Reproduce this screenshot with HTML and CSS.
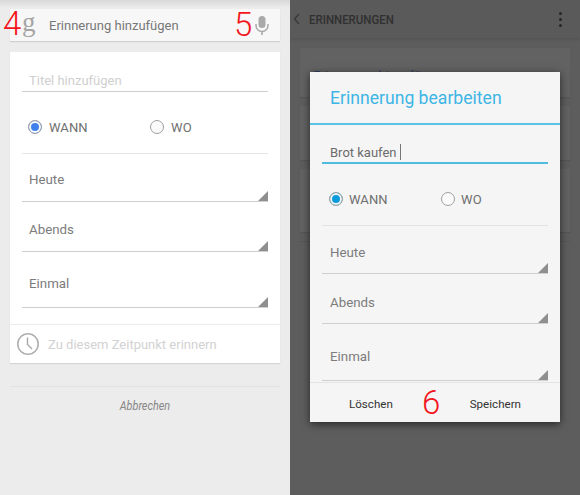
FILE: index.html
```html
<!DOCTYPE html>
<html lang="de">
<head>
<meta charset="utf-8">
<title>Erinnerung</title>
<link rel="stylesheet" href="styles.css">
</head>
<body>
<div class="screens">
  <section class="pane left">
    <div class="searchbar">
      <span class="g-logo">g</span>
      <span class="search-text">Erinnerung hinzufügen</span>
      <svg class="mic" width="14" height="20" viewBox="0 0 14 20"><rect x="3.500" y="0" width="7" height="12" rx="3.500" fill="#a9a9a9"/><path d="M1 8v1.500a6 6 0 0 0 12 0V8" fill="none" stroke="#a9a9a9" stroke-width="1.500"/><rect x="6.200" y="15" width="1.600" height="4" fill="#a9a9a9"/></svg>
    </div>
    <div class="card">
      <div class="title-field">Titel hinzufügen</div>
      <div class="radios">
        <span class="radio-item wide"><span class="radio on"></span>WANN</span>
        <span class="radio-item"><span class="radio"></span>WO</span>
      </div>
      <div class="rule"></div>
      <div class="select first">Heute</div>
      <div class="select">Abends</div>
      <div class="select tall">Einmal</div>
      <div class="time-row">
        <svg class="clock" width="24" height="24" viewBox="0 0 24 24"><circle cx="12" cy="12" r="10.200" fill="none" stroke="#b0b0b0" stroke-width="1.600"/><path d="M11.500 5.500v7l4.500 4.500" fill="none" stroke="#a8a8a8" stroke-width="1.400"/></svg>
        <span>Zu diesem Zeitpunkt erinnern</span>
      </div>
    </div>
    <div class="cancel"><span class="cancel-text">Abbrechen</span></div>
  </section>
  <section class="pane right">
    <header class="topbar">
      <svg class="back" width="7" height="12" viewBox="0 0 7 12"><path d="M6 1 1.500 6 6 11" fill="none" stroke="#3a3a3a" stroke-width="1.500"/></svg>
      <span class="bar-title">ERINNERUNGEN</span>
      <span class="dots"><i></i><i></i><i></i></span>
    </header>
    <div class="bg-card"><span class="bg-text">Erinnerung hinzufügen</span></div>
    <div class="bg-card second"></div>
    <div class="bg-card third"></div>
    <div class="bg-line"></div>
    <div class="dialog">
      <h1 class="dlg-title">Erinnerung bearbeiten</h1>
      <div class="dlg-body">
        <div class="edit-field">Brot kaufen<span class="caret"></span></div>
        <div class="radios dlg-radios">
          <span class="radio-item wide"><span class="radio on cyan"></span>WANN</span>
          <span class="radio-item"><span class="radio"></span>WO</span>
        </div>
        <div class="rule"></div>
        <div class="select first">Heute</div>
        <div class="select">Abends</div>
        <div class="select tall">Einmal</div>
      </div>
      <div class="dlg-actions">
        <span>Löschen</span>
        <span>Speichern</span>
      </div>
    </div>
  </section>
  <span class="mark m4">4</span>
  <span class="mark m5">5</span>
  <span class="mark m6">6</span>
</div>
</body>
</html>
```

FILE: styles.css
```css
* { box-sizing: border-box; }
html, body { margin: 0; padding: 0; }
body { width: 580px; height: 495px; overflow: hidden; font-family: Roboto, "Liberation Sans", sans-serif; }
.screens { position: relative; display: flex; width: 580px; height: 495px; }
.pane { width: 290px; height: 495px; position: relative; overflow: hidden; }

.left { background: linear-gradient(#d8d8d8 0, #ececec 8px); padding: 9px 10px 0; }
.searchbar { display: flex; align-items: center; height: 32px; background: #f7f7f7; box-shadow: 0 1px 1px #d0d0d0; padding: 0 11px 0 12px; }
.g-logo { width: 27px; font: 27px/28px "Liberation Serif", serif; color: #a5a5a5; margin-top: -6px; }
.search-text { flex: 1; font-size: 13px; color: #777; }
.mic { margin-top: 1px; }

.card { margin-top: 11px; height: 311px; background: #fff; box-shadow: 0 1px 1px #d4d4d4; padding: 0 12px; }
.title-field { height: 40px; padding: 20px 0 0 7px; font-size: 13px; line-height: 17px; color: #cfcfcf; border-bottom: 1px solid #cfcfcf; }
.radios { display: flex; align-items: center; height: 61px; padding: 9px 0 0 6px; font-size: 13px; letter-spacing: .1px; color: #6f6f6f; }
.radio-item { display: flex; align-items: center; gap: 7px; }
.radio-item.wide { width: 122px; }
.radio { width: 14px; height: 14px; border-radius: 50%; border: 1px solid #a0a0a0; background: #fafafa; }
.radio.on { background: #3f82ee; box-shadow: inset 0 0 0 2px #fff; }
.radio.cyan { background: #0e9bdc; box-shadow: inset 0 0 0 2px #f5f5f5; }
.rule { height: 1px; background: #e6e6e6; }

.select { position: relative; height: 50px; padding: 19px 0 0 7px; font-size: 13.300px; line-height: 17px; color: #7c7c7c; border-bottom: 1px solid #cfcfcf; }
.select.first { height: 48px; padding-top: 17px; }
.select.tall { height: 56px; padding-top: 23px; }
.select::after { content: ""; position: absolute; right: 0; bottom: 0; width: 0; height: 0; border-style: solid; border-width: 0 0 10px 10px; border-color: transparent transparent #8f8f8f transparent; }

.time-row { display: flex; align-items: center; gap: 8px; height: 39px; margin: 16px -12px 0; padding: 0 0 0 6px; border-top: 1px solid #ececec; font-size: 13px; color: #d2d2d2; }
.cancel { margin-top: 23px; padding-top: 12px; height: 40px; border-top: 1px solid #e2e2e2; text-align: center; font-size: 12px; font-style: italic; color: #868686; }
.cancel-text { display: inline-block; transform: scaleX(.9); }

.right { background: #5d5d5d; padding: 0 10px; }
.topbar { display: flex; align-items: center; height: 38px; margin: 0 -10px; padding: 0 20px 0 3px; background: #5a5a5a; box-shadow: 0 1px 3px #505050; font-size: 13px; color: #303030; }
.back { margin-right: 9px; }
.bar-title { flex: 1; font-weight: 500; transform: scaleX(.88); transform-origin: left; }
.dots { display: flex; flex-direction: column; gap: 3px; margin-right: -2px; }
.dots i { display: block; width: 3px; height: 3px; background: #262626; border-radius: 50%; }
.bg-card { margin-top: 10px; height: 49px; background: #626262; box-shadow: 0 1px 1px #555; padding: 20px 13px 0; font-size: 13px; color: #33415f; }
.bg-card.second { margin-top: 9px; height: 54px; }
.bg-card.third { margin-top: 9px; height: 63px; }
.bg-line { margin-top: 9px; height: 1px; background: #565656; }
.dialog { position: absolute; left: 20px; top: 72px; width: 250px; height: 350px; display: flex; flex-direction: column; background: #f5f5f5; box-shadow: 0 2px 8px rgba(0,0,0,.6); }
.dlg-title { margin: 0; height: 53px; padding: 15px 0 0 20px; font-weight: 400; font-size: 17.600px; line-height: 22px; color: #3db5e6; border-bottom: 2px solid #5cc1e6; }
.dlg-body { flex: 1; padding: 0 12px; overflow: hidden; }
.edit-field { height: 39px; padding: 19px 0 0 8px; font-size: 13px; line-height: 17px; color: #6c6c6c; border-bottom: 2px solid #50bbdf; display: flex; }
.caret { width: 1px; height: 16px; margin-left: 3px; background: #777; }
.dlg-radios { padding: 9px 0 0 7px; }
.dlg-radios .radio-item { gap: 6px; }
.dlg-radios .radio-item.wide { width: 112px; }
.dlg-body .rule { background: #e2e2e2; }
.dlg-body .select { padding: 20px 0 0 8px; }
.dlg-body .select.first { padding-top: 18px; }
.dlg-body .select.tall { height: 57px; padding-top: 24px; }
.dlg-actions { flex: none; display: flex; justify-content: space-between; align-items: center; height: 40px; padding: 2px 39px 0; border-top: 1px solid #e4e4e4; font-size: 11.600px; color: #333; }

.mark { position: absolute; font-family: Roboto, sans-serif; color: #f4141c; font-size: 33px; line-height: 30px; font-weight: 300; }
.m4 { left: 3px; top: 9px; }
.m5 { left: 234px; top: 10px; }
.m6 { left: 422px; top: 388px; }
```
